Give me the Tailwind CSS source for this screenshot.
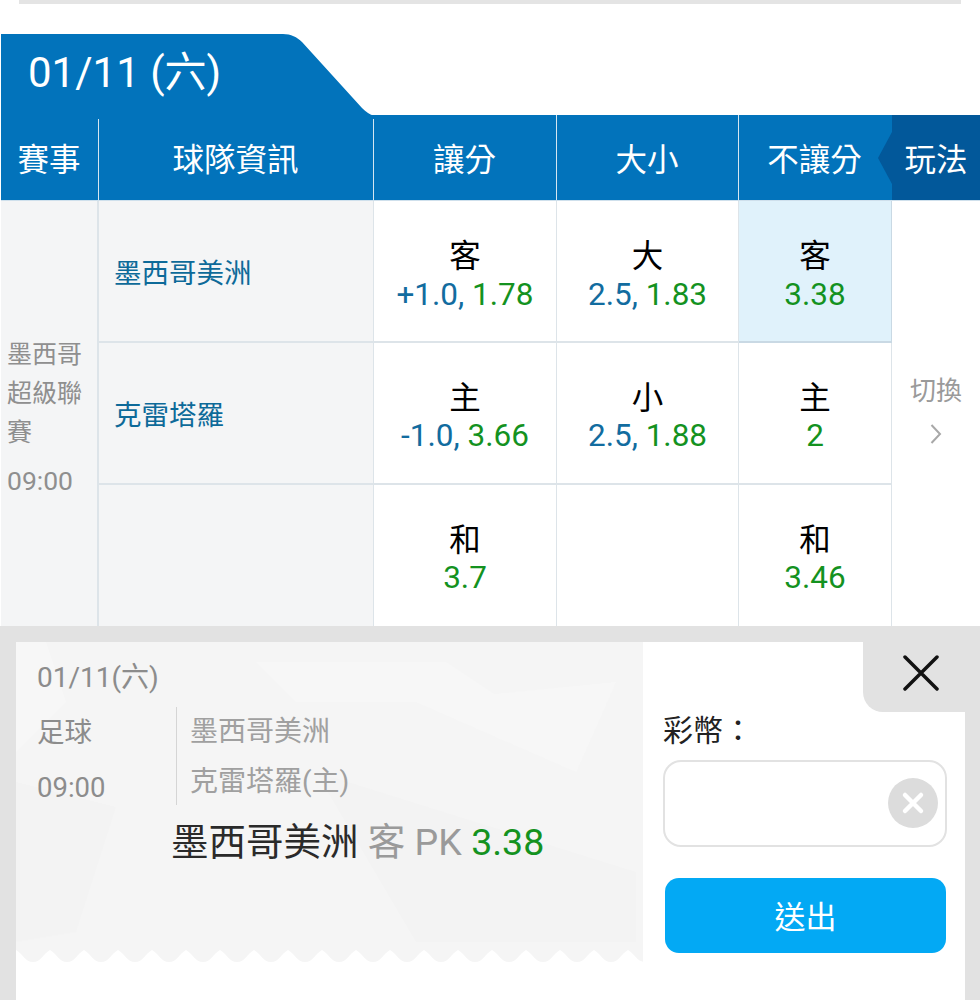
<!DOCTYPE html>
<html lang="zh-Hant">
<head>
<meta charset="utf-8">
<script src="https://cdn.jsdelivr.net/npm/@tailwindcss/browser@4"></script>
</head>
<body class="bg-white font-['Roboto','Noto_Sans_CJK_TC',sans-serif]">
<div class="relative w-[980px] h-[1000px] overflow-hidden flex flex-col">
  <div class="mx-[19px] w-[942px] h-[4px] shrink-0 bg-[#e4e4e4]"></div>
  <div class="relative mt-[30px] h-[81px] shrink-0">
    <svg class="absolute left-0 top-0" width="400" height="82" viewBox="0 0 400 82"><path d="M1 82V0H283C291 0 297 3 302 8L362 74C366 78 370 81 374 81.500V82Z" fill="#0273bb"/></svg>
    <div class="relative pl-[28px] text-[42px] leading-[78px] text-white">01/11 (六)</div>
  </div>
  <div class="ml-px grid grid-cols-[98px_275px_183px_182px_153px_1fr] grid-rows-[85px] h-[86px] shrink-0 bg-[#0273bb] border-b border-[#cfe0ec] text-white text-[31.500px] text-center leading-[91px]">
    <div class="relative pr-[2px]"><span>賽事</span><i class="absolute right-0 top-[4px] bottom-0 w-px bg-[#d5e6f1]"></i></div>
    <div class="relative pr-[2px]"><span>球隊資訊</span><i class="absolute right-0 top-[4px] bottom-0 w-px bg-[#d5e6f1]"></i></div>
    <div class="relative pr-[2px]"><span>讓分</span><i class="absolute right-0 top-0 bottom-0 w-px bg-[#d5e6f1]"></i></div>
    <div class="relative pr-[2px]"><span>大小</span><i class="absolute right-0 top-0 bottom-0 w-px bg-[#d5e6f1]"></i></div>
    <div class="relative pr-[2px]"><span>不讓分</span></div>
    <div class="relative bg-[#02589a]"><span>玩法</span>
      <svg class="absolute left-[-14px] top-[17px]" width="14" height="52" viewBox="0 0 14 52"><path d="M14 0V52L0 26Z" fill="#02589a"/></svg>
    </div>
  </div>
  <div class="ml-px grid grid-cols-[98px_275px_183px_182px_153px_1fr] grid-rows-[142px_142px_141px] h-[425px] shrink-0 text-center">
    <div class="row-span-3 bg-[#f4f5f6] border-r-2 border-[#dde4e9] text-left pl-[6px] pt-[134px] leading-[39px] text-[#8f8f8f]">
      <div class="text-[25px]">墨西哥<br>超級聯<br>賽</div>
      <div class="mt-[9px] text-[26.500px]">09:00</div>
    </div>
    <div class="bg-[#f4f5f6] border-r border-b-2 border-[#dde4e9] flex items-center pl-[15px] pt-[6px] text-[27.500px] text-[#0d6a99]">墨西哥美洲</div>
    <div class="border-r border-b-2 border-[#dde4e9] pt-[37px] text-[31.500px] leading-[38px]"><div class="text-black">客</div><div><span class="text-[#126c9f]">+1.0, </span><span class="text-[#14921f]">1.78</span></div></div>
    <div class="border-r border-b-2 border-[#dde4e9] pt-[37px] text-[31.500px] leading-[38px]"><div class="text-black">大</div><div><span class="text-[#126c9f]">2.5, </span><span class="text-[#14921f]">1.83</span></div></div>
    <div class="bg-[#e0f2fb] border-r border-b-2 border-[#c9d9e4] pt-[37px] text-[31.500px] leading-[38px]"><div class="text-black">客</div><div class="text-[#14921f]">3.38</div></div>
    <div class="row-span-3 flex flex-col items-center pt-[171px] text-[26px] leading-[39px] text-[#9a9a9a]">
      <div>切換</div>
      <svg class="mt-[12px]" width="12" height="22" viewBox="0 0 12 22" fill="none" stroke="#a8a8a8" stroke-width="2"><path d="M1.500 2L10 11L1.500 20"/></svg>
    </div>
    <div class="bg-[#f4f5f6] border-r border-b-2 border-[#dde4e9] flex items-center pl-[15px] pt-[6px] text-[27.500px] text-[#0d6a99]">克雷塔羅</div>
    <div class="border-r border-b-2 border-[#dde4e9] pt-[37px] text-[31.500px] leading-[38px]"><div class="text-black">主</div><div class="-mt-px"><span class="text-[#126c9f]">-1.0, </span><span class="text-[#14921f]">3.66</span></div></div>
    <div class="border-r border-b-2 border-[#dde4e9] pt-[37px] text-[31.500px] leading-[38px]"><div class="text-black">小</div><div class="-mt-px"><span class="text-[#126c9f]">2.5, </span><span class="text-[#14921f]">1.88</span></div></div>
    <div class="border-r border-b-2 border-[#dde4e9] pt-[37px] text-[31.500px] leading-[38px]"><div class="text-black">主</div><div class="-mt-px text-[#14921f]">2</div></div>
    <div class="bg-[#f4f5f6] border-r border-[#dde4e9]"></div>
    <div class="border-r border-[#dde4e9] pt-[37px] text-[31.500px] leading-[38px]"><div class="text-black">和</div><div class="-mt-px text-[#14921f]">3.7</div></div>
    <div class="border-r border-[#dde4e9]"></div>
    <div class="border-r border-[#dde4e9] pt-[37px] text-[31.500px] leading-[38px]"><div class="text-black">和</div><div class="-mt-px text-[#14921f]">3.46</div></div>
  </div>
  <div class="flex-1 bg-[#e2e2e2] pl-[16px] pr-[15px] pt-[16px]">
    <div class="relative h-full bg-white flex">
      <div class="relative w-[627px] h-[320px] shrink-0">
        <svg class="absolute inset-0" width="627" height="320" viewBox="0 0 627 320">
          <path d="M0 0H629V320c-8 0-10-8-17-12c-7 4-9 12-17 12c-8 0-10-8-17-12c-7 4-9 12-17 12c-8 0-10-8-17-12c-7 4-9 12-17 12c-8 0-10-8-17-12c-7 4-9 12-17 12c-8 0-10-8-17-12c-7 4-9 12-17 12c-8 0-10-8-17-12c-7 4-9 12-17 12c-8 0-10-8-17-12c-7 4-9 12-17 12c-8 0-10-8-17-12c-7 4-9 12-17 12c-8 0-10-8-17-12c-7 4-9 12-17 12c-8 0-10-8-17-12c-7 4-9 12-17 12c-8 0-10-8-17-12c-7 4-9 12-17 12c-8 0-10-8-17-12c-7 4-9 12-17 12c-8 0-10-8-17-12c-7 4-9 12-17 12c-8 0-10-8-17-12c-7 4-9 12-17 12c-8 0-10-8-17-12c-7 4-9 12-17 12c-8 0-10-8-17-12c-7 4-9 12-17 12c-8 0-10-8-17-12c-7 4-9 12-17 12c-8 0-10-8-17-12c-7 4-9 12-17 12c-8 0-10-8-17-12c-7 4-9 12-17 12c-8 0-10-8-17-12Z" fill="#f5f5f5"/>
          <path d="M0 0H30L50 60L0 110ZM240 20H430L490 60H280ZM400 60L600 40L560 130Z" fill="#f7f7f7"/>
          <path d="M0 140L100 165L60 290L0 300ZM300 130L620 230V300L400 300Z" fill="#f3f3f3"/>
        </svg>
        <div class="relative pl-[21px] pt-[18px] text-[28px] leading-[36px] text-[#8c8c8c]">01/11(六)</div>
        <div class="relative mt-[11px] flex">
          <div class="w-[160px] -mt-[2px] pl-[21px] text-[27.500px] leading-[55px] text-[#8c8c8c]">足球<br>09:00</div>
          <div class="border-l border-[#d5d5d5] pl-[13px] text-[28px] leading-[50px] text-[#a0a0a0] h-[98px]">墨西哥美洲<br>克雷塔羅(主)</div>
        </div>
        <div class="relative pl-[155px] mt-[5px] text-[37.500px] leading-[44px] text-[#2a2a2a] whitespace-nowrap">墨西哥美洲 <span class="text-[#9a9a9a]">客 PK</span> <span class="text-[#14921f]">3.38</span></div>
      </div>
      <div class="flex-1 pl-[20px] pr-[18px] pt-[70px]">
        <div class="text-[30px] leading-[38px] text-[#222]">彩幣：</div>
        <div class="relative mt-[10px] h-[87px] w-[284px] rounded-[18px] border-2 border-[#e2e2e2]">
          <svg class="absolute right-[6px] top-[15px]" width="52" height="52" viewBox="0 0 52 52"><circle cx="26" cy="26" r="25" fill="#dcdcdc"/><path d="M18 18L34 34M34 18L18 34" stroke="#fff" stroke-width="4.500" stroke-linecap="round"/></svg>
        </div>
        <div class="mt-[31px] ml-[2px] h-[75px] w-[281px] rounded-[14px] bg-[#03a9f4] text-white text-[31px] leading-[80px] text-center">送出</div>
      </div>
      <div class="absolute right-0 top-0 w-[102px] h-[70px] bg-[#e2e2e2] rounded-bl-[20px] flex items-start justify-center pl-[14px] pt-[13px]">
        <svg width="36" height="36" viewBox="0 0 36 36"><path d="M2 2L34 34M34 2L2 34" stroke="#111" stroke-width="3.500" stroke-linecap="round" fill="none"/></svg>
      </div>
    </div>
  </div>
</div>
</body>
</html>
